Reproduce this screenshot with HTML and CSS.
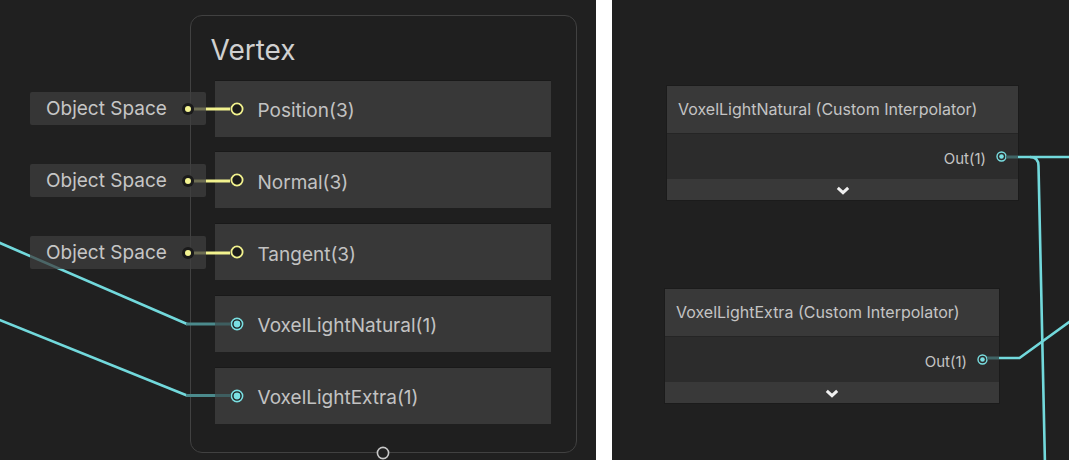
FILE: index.html
```html
<!DOCTYPE html>
<html>
<head>
<meta charset="utf-8">
<link rel="stylesheet" href="styles.css">
</head>
<body>
<div class="app">
  <section class="canvas left">
    <div class="vertex-node">
      <div class="vn-title">Vertex</div>
      <div class="vn-rows">
        <div class="vn-row">
          <svg class="port-lg" width="14" height="14" viewBox="0 0 14 14"><circle cx="7" cy="7" r="5.6" fill="#1c1c1c" stroke="#f2f28e" stroke-width="1.8"/></svg>
          <span class="vn-label">Position(3)</span>
        </div>
        <div class="vn-row">
          <svg class="port-lg" width="14" height="14" viewBox="0 0 14 14"><circle cx="7" cy="7" r="5.6" fill="#1c1c1c" stroke="#f2f28e" stroke-width="1.8"/></svg>
          <span class="vn-label">Normal(3)</span>
        </div>
        <div class="vn-row">
          <svg class="port-lg" width="14" height="14" viewBox="0 0 14 14"><circle cx="7" cy="7" r="5.6" fill="#1c1c1c" stroke="#f2f28e" stroke-width="1.8"/></svg>
          <span class="vn-label">Tangent(3)</span>
        </div>
        <div class="vn-row">
          <svg class="port-lg" width="14" height="14" viewBox="0 0 14 14"><circle cx="7" cy="7" r="5.6" fill="#1c1c1c" stroke="#7adfe2" stroke-width="1.6"/><circle cx="7" cy="7" r="3.4" fill="#7adfe2"/></svg>
          <span class="vn-label">VoxelLightNatural(1)</span>
        </div>
        <div class="vn-row">
          <svg class="port-lg" width="14" height="14" viewBox="0 0 14 14"><circle cx="7" cy="7" r="5.6" fill="#1c1c1c" stroke="#7adfe2" stroke-width="1.6"/><circle cx="7" cy="7" r="3.4" fill="#7adfe2"/></svg>
          <span class="vn-label">VoxelLightExtra(1)</span>
        </div>
      </div>
      <svg class="vn-bottom-port" width="14" height="14" viewBox="0 0 14 14"><circle cx="7" cy="7" r="5.6" fill="#202020" stroke="#c8c8c8" stroke-width="1.6"/></svg>
    </div>

    <svg class="wires" width="596" height="460" viewBox="0 0 596 460">
      <polyline points="-10,238.7 187,324" fill="none" stroke="#72d9dc" stroke-width="2.6"/>
      <line x1="186" y1="324" x2="215" y2="324" stroke="#4b8a8c" stroke-width="3"/>
      <line x1="215" y1="324" x2="231" y2="324" stroke="#3e5e60" stroke-width="3"/>
      <polyline points="-10,316 187,395.5" fill="none" stroke="#72d9dc" stroke-width="2.6"/>
      <line x1="186" y1="395.5" x2="215" y2="395.5" stroke="#4b8a8c" stroke-width="3"/>
      <line x1="215" y1="395.5" x2="231" y2="395.5" stroke="#3e5e60" stroke-width="3"/>
      <line x1="194" y1="109" x2="230" y2="109" stroke="#f2f28e" stroke-width="2.8"/>
      <line x1="194" y1="181" x2="230" y2="181" stroke="#f2f28e" stroke-width="2.8"/>
      <line x1="194" y1="253" x2="230" y2="253" stroke="#f2f28e" stroke-width="2.8"/>
    </svg>

    <div class="fields">
      <div class="field"><span class="field-text">Object Space</span><span class="field-dot"></span></div>
      <div class="field"><span class="field-text">Object Space</span><span class="field-dot"></span></div>
      <div class="field"><span class="field-text">Object Space</span><span class="field-dot"></span></div>
    </div>
  </section>

  <div class="divider"></div>

  <section class="canvas right">
    <svg class="wires-right" width="457" height="460" viewBox="612 0 457 460">
      <line x1="1006" y1="157" x2="1018" y2="157" stroke="#406566" stroke-width="3"/>
      <path d="M1018,157 H1072" fill="none" stroke="#72d9dc" stroke-width="2.6"/>
      <path d="M1030,157 Q1038.5,157 1038.5,166 L1045,465" fill="none" stroke="#72d9dc" stroke-width="2.6"/>
      <line x1="987" y1="358" x2="999" y2="358" stroke="#406566" stroke-width="3"/>
      <path d="M999,358 H1019.5 L1072,320" fill="none" stroke="#72d9dc" stroke-width="2.6"/>
    </svg>

    <div class="ci-node ci-natural">
      <div class="ci-header">VoxelLightNatural (Custom Interpolator)</div>
      <div class="ci-body">
        <span class="ci-label">Out(1)</span>
        <svg class="port-sm" width="11" height="11" viewBox="0 0 11 11"><circle cx="5.5" cy="5.5" r="4.5" fill="#2b2b2b" stroke="#7adfe2" stroke-width="1.4"/><circle cx="5.5" cy="5.5" r="2.3" fill="#7adfe2"/></svg>
      </div>
      <div class="ci-footer">
        <svg width="14" height="9" viewBox="0 0 14 9"><path d="M1.8,1.8 L7,6.6 L12.2,1.8" fill="none" stroke="#f0f0f0" stroke-width="3" stroke-linejoin="miter"/></svg>
      </div>
    </div>

    <div class="ci-node ci-extra">
      <div class="ci-header">VoxelLightExtra (Custom Interpolator)</div>
      <div class="ci-body">
        <span class="ci-label">Out(1)</span>
        <svg class="port-sm" width="11" height="11" viewBox="0 0 11 11"><circle cx="5.5" cy="5.5" r="4.5" fill="#2b2b2b" stroke="#7adfe2" stroke-width="1.4"/><circle cx="5.5" cy="5.5" r="2.3" fill="#7adfe2"/></svg>
      </div>
      <div class="ci-footer">
        <svg width="14" height="9" viewBox="0 0 14 9"><path d="M1.8,1.8 L7,6.6 L12.2,1.8" fill="none" stroke="#f0f0f0" stroke-width="3" stroke-linejoin="miter"/></svg>
      </div>
    </div>
  </section>
</div>
</body>
</html>
```

FILE: styles.css
```css
* { box-sizing: border-box; }

html, body {
  margin: 0;
  padding: 0;
  width: 1069px;
  height: 460px;
  overflow: hidden;
  background: #202020;
  font-family: Inter, "Noto Sans", sans-serif;
}

.app {
  display: flex;
  width: 1069px;
  height: 460px;
}

.canvas {
  position: relative;
  height: 460px;
  background: #202020;
  overflow: hidden;
}

.left { width: 596px; flex: none; }

.divider {
  width: 16px;
  flex: none;
  background: #ffffff;
}

.right { flex: 1; }

/* ---------- Vertex master node ---------- */
.vertex-node {
  position: absolute;
  left: 190px;
  top: 15px;
  width: 387px;
  height: 438px;
  border: 1.5px solid #414141;
  border-radius: 12px;
  background: #1f1f1f;
  padding-top: 16.5px;
  z-index: 1;
}

.vn-title {
  height: 34px;
  line-height: 34px;
  padding-left: 19.5px;
  font-size: 28px;
  color: #d0d0d0;
  margin-bottom: 14px;
}

.vn-rows {
  display: flex;
  flex-direction: column;
  gap: 15.75px;
  margin-left: 23.5px;
  width: 336px;
}

.vn-row {
  height: 56px;
  display: flex;
  align-items: center;
  gap: 14px;
  padding-left: 15px;
  background: #383838;
  box-shadow: 0 -1px 0 #191919;
}

.port-lg { flex: none; display: block; }

.vn-label {
  font-size: 19px;
  color: #c2c2c2;
  padding-top: 5px;
  line-height: 24px;
}

.vn-bottom-port {
  position: absolute;
  left: 185px;
  bottom: -8px;
  display: block;
}

/* ---------- wires ---------- */
.wires {
  position: absolute;
  left: 0;
  top: 0;
  z-index: 2;
  pointer-events: none;
}

.wires-right {
  position: absolute;
  left: 0;
  top: 0;
  z-index: 2;
}

/* ---------- Object Space fields ---------- */
.fields {
  position: absolute;
  left: 30px;
  top: 92px;
  display: flex;
  flex-direction: column;
  gap: 39px;
  z-index: 3;
}

.field {
  width: 176px;
  height: 33px;
  display: flex;
  align-items: center;
  padding-left: 16px;
  padding-right: 12px;
  background: rgba(62, 62, 62, 0.74);
  border-radius: 2px;
}

.field-text {
  font-size: 19px;
  color: #c6c6c6;
  line-height: 24px;
}

.field-dot {
  margin-left: auto;
  width: 12px;
  height: 12px;
  border-radius: 50%;
  background: #1a1a1a;
  position: relative;
}

.field-dot::after {
  content: "";
  position: absolute;
  left: 3px;
  top: 3px;
  width: 6px;
  height: 6px;
  border-radius: 50%;
  background: #f4f492;
}

/* ---------- Custom interpolator nodes ---------- */
.ci-node {
  position: absolute;
  display: flex;
  flex-direction: column;
  box-shadow: 0 0 0 1px #1b1b1b;
  z-index: 1;
}

.ci-natural { left: 55px; top: 86px; width: 351px; }
.ci-extra { left: 53px; top: 289px; width: 334px; }

.ci-header {
  height: 48px;
  line-height: 47px;
  padding-left: 11px;
  background: #393939;
  border-bottom: 1px solid #252525;
  font-size: 16px;
  color: #c4c4c4;
  white-space: nowrap;
}

.ci-body {
  height: 45px;
  background: #2c2c2c;
  display: flex;
  align-items: center;
  justify-content: flex-end;
  gap: 10px;
  padding-right: 11px;
}

.ci-label {
  font-size: 15px;
  color: #c4c4c4;
  padding-top: 3px;
}

.port-sm { display: block; flex: none; }

.ci-footer {
  height: 21px;
  background: #393939;
  display: flex;
  align-items: center;
  justify-content: center;
}

.ci-footer svg { display: block; margin-top: 1px; }
```
